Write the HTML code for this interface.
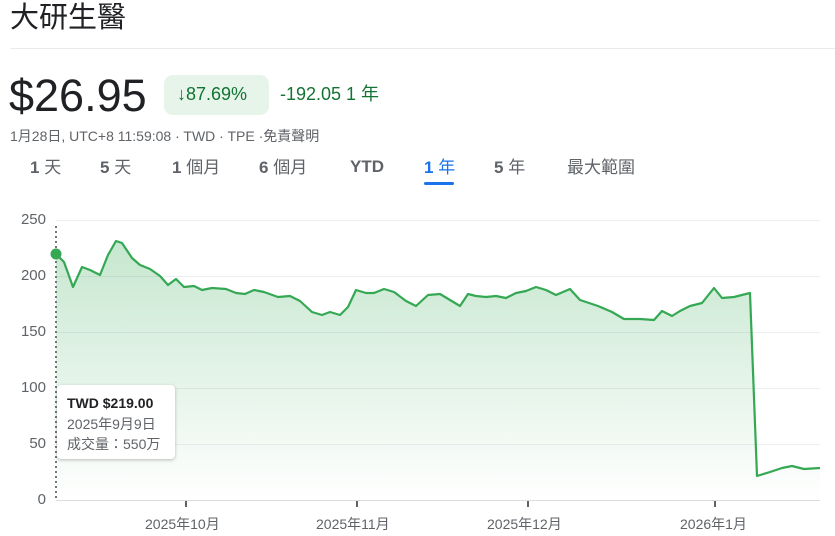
<!DOCTYPE html>
<html><head><meta charset="utf-8"><style>
body{margin:0;width:835px;height:536px;background:#fff;font-family:"Liberation Sans","Noto Sans CJK TC",sans-serif;position:relative;overflow:hidden;color:#202124}
.a{position:absolute;white-space:nowrap}
.tab{position:absolute;top:156px;font-size:17px;line-height:24px;color:#5f6368}
.tab b{font-weight:bold}
.yl{position:absolute;left:0;width:46px;text-align:right;font-size:15px;color:#5f6368}
.xl{position:absolute;top:514px;font-size:14px;color:#5f6368}
</style></head><body>
<div class="a" style="left:10px;top:1px;font-size:29px;line-height:34px;color:#202124">大研生醫</div>
<div class="a" style="left:10px;top:48px;width:825px;border-top:1px solid #e8eaed"></div>
<div class="a" style="left:9px;top:70px;font-size:45px;color:#202124">$26.95</div>
<div class="a" style="left:164px;top:75px;width:105px;height:40px;background:#e6f4ea;border-radius:9px"></div>
<div class="a" style="left:177px;top:83px;font-size:18px;line-height:22px;color:#137333">↓87.69%</div>
<div class="a" style="left:280px;top:83px;font-size:18px;line-height:22px;color:#137333">-192.05 1 年</div>
<div class="a" style="left:10px;top:126px;font-size:14px;color:#5f6368">1月28日, UTC+8 11:59:08 · TWD · TPE ·免責聲明</div>
<div class="tab" style="left:30px"><b>1</b> 天</div>
<div class="tab" style="left:100px"><b>5</b> 天</div>
<div class="tab" style="left:172px"><b>1</b> 個月</div>
<div class="tab" style="left:259px"><b>6</b> 個月</div>
<div class="tab" style="left:350px;top:155px"><b>YTD</b></div>
<div class="tab" style="left:424px;color:#1a73e8"><b>1</b> 年</div>
<div class="a" style="left:424px;top:182px;width:30px;height:3px;background:#1a73e8;border-radius:2px"></div>
<div class="tab" style="left:494px"><b>5</b> 年</div>
<div class="tab" style="left:567px">最大範圍</div>
<div class="yl" style="top:211px">250</div>
<div class="yl" style="top:267px">200</div>
<div class="yl" style="top:323px">150</div>
<div class="yl" style="top:379px">100</div>
<div class="yl" style="top:435px">50</div>
<div class="yl" style="top:491px">0</div>
<svg class="a" style="left:0;top:0" width="835" height="536">
<defs><linearGradient id="g" x1="0" y1="0" x2="0" y2="1"><stop offset="0" stop-color="#34a853" stop-opacity=".28"/><stop offset="1" stop-color="#34a853" stop-opacity="0"/></linearGradient></defs>
<g stroke="#eceff1" stroke-width="1"><line x1="56" y1="220.5" x2="820" y2="220.5"/><line x1="56" y1="276.5" x2="820" y2="276.5"/><line x1="56" y1="332.5" x2="820" y2="332.5"/><line x1="56" y1="388.5" x2="820" y2="388.5"/><line x1="56" y1="444.5" x2="820" y2="444.5"/></g>
<line x1="56" y1="500.5" x2="820" y2="500.5" stroke="#dadce0"/>
<g stroke="#5f6368" stroke-width="2"><line x1="186" y1="501" x2="186" y2="507"/><line x1="357" y1="501" x2="357" y2="507"/><line x1="528" y1="501" x2="528" y2="507"/><line x1="715" y1="501" x2="715" y2="507"/></g>
<path d="M56,254 L64,262 73,287 82,267 90,270 100,275 108,255 116,241 122,243 132,258 140,265 150,269 160,276 168,285 176,279 184,287 194,286 202,290 212,288 226,289 236,293 245,294 254,290 264,292 278,297 290,296 300,301 312,312 322,315 330,312 340,315 348,307 356,290 366,293 374,293 384,289 394,292 406,301 416,306 428,295 440,294 450,300 460,306 468,294 476,296 486,297 496,296 506,298 516,293 526,291 536,287 546,290 556,295 570,289 580,300 598,306 612,312 624,319 640,319 654,320 662,311 672,316 680,311 690,306 702,303 714,288 722,298 734,297 742,295 750,293 757,476 770,472 782,468 792,466 804,469 820,468 L820,500 L56,500Z" fill="url(#g)"/>
<path d="M56,254 L64,262 73,287 82,267 90,270 100,275 108,255 116,241 122,243 132,258 140,265 150,269 160,276 168,285 176,279 184,287 194,286 202,290 212,288 226,289 236,293 245,294 254,290 264,292 278,297 290,296 300,301 312,312 322,315 330,312 340,315 348,307 356,290 366,293 374,293 384,289 394,292 406,301 416,306 428,295 440,294 450,300 460,306 468,294 476,296 486,297 496,296 506,298 516,293 526,291 536,287 546,290 556,295 570,289 580,300 598,306 612,312 624,319 640,319 654,320 662,311 672,316 680,311 690,306 702,303 714,288 722,298 734,297 742,295 750,293 757,476 770,472 782,468 792,466 804,469 820,468" fill="none" stroke="#34a853" stroke-width="2.2" stroke-linejoin="round"/>
<line x1="56" y1="226" x2="56" y2="500" stroke="#70757a" stroke-width="2" stroke-dasharray="2,3"/>
<circle cx="56" cy="254" r="5.5" fill="#34a853"/>
</svg>
<div class="a" style="left:57px;top:385px;width:118px;height:74px;background:#fff;border-radius:4px;box-shadow:0 1px 3px rgba(60,64,67,.35)"></div>
<div class="a" style="left:67px;top:395px;font-size:14px;font-weight:bold;color:#202124">TWD $219.00</div>
<div class="a" style="left:67px;top:414px;font-size:14px;color:#5f6368">2025年9月9日</div>
<div class="a" style="left:67px;top:434px;font-size:14px;color:#5f6368">成交量：550万</div>
<div class="xl" style="left:145px">2025年10月</div>
<div class="xl" style="left:316px">2025年11月</div>
<div class="xl" style="left:487px">2025年12月</div>
<div class="xl" style="left:680px">2026年1月</div>
</body></html>
